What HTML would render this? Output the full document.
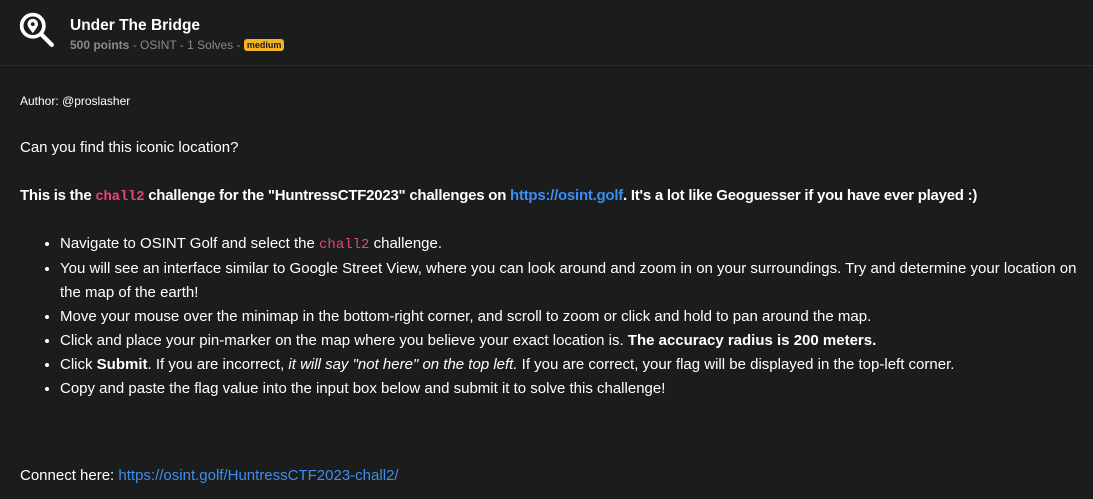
<!DOCTYPE html>
<html><head><meta charset="utf-8"><style>
html,body{margin:0;padding:0;background:#1b1c1c;width:1093px;height:499px;overflow:hidden;font-family:"Liberation Sans",sans-serif;color:#fff}
.hdr{height:65px;border-bottom:1px solid #2c2d2d;position:relative}
.icon{position:absolute;left:19px;top:12px}
.title{position:absolute;left:70px;top:17px;font-weight:bold;font-size:15.5px}
.sub{position:absolute;left:70px;top:38px;font-size:12px;color:#8d8a86}
.sub b{color:#8d8a86}
.badge{background:#f5b226;color:#1b1c1c;font-weight:bold;font-size:9px;padding:1px 3px;border-radius:3px;vertical-align:1px}
.t{position:absolute;left:20px;font-size:15px;white-space:nowrap}
code{font-family:"Liberation Mono",monospace;color:#e8447f;font-size:14px}
a{color:#3d8ef0;text-decoration:none}
ul{position:absolute;left:20px;top:232px;width:1035px;margin:0;padding-left:40px;font-size:15px;line-height:24px}
</style></head><body>
<div class="hdr">
<svg class="icon" width="36" height="36" viewBox="0 0 34 34"><circle cx="13" cy="13" r="10.5" fill="none" stroke="#fff" stroke-width="3.5"/><line x1="21" y1="21" x2="31" y2="31" stroke="#fff" stroke-width="4" stroke-linecap="round"/><path d="M13 20 C9 15 8 13 8 11.5 A5 5 0 0 1 18 11.5 C18 13 17 15 13 20Z" fill="#fff"/><circle cx="13" cy="11.5" r="1.8" fill="#1b1c1c"/></svg>
<div class="title">Under The Bridge</div>
<div class="sub"><b>500 points</b> - OSINT - 1 Solves - <span class="badge">medium</span></div>
</div>
<div class="t" style="top:94px;font-size:12px">Author: @proslasher</div>
<div class="t" style="top:139px">Can you find this iconic location?</div>
<div class="t" style="top:187px;font-weight:bold;letter-spacing:-0.25px">This is the <code>chall2</code> challenge for the "HuntressCTF2023" challenges on <a href="#">https://osint.golf</a>. It's a lot like Geoguesser if you have ever played :)</div>
<ul>
<li>Navigate to OSINT Golf and select the <code>chall2</code> challenge.</li>
<li>You will see an interface similar to Google Street View, where you can look around and zoom in on your surroundings. Try and determine your location on the map of the earth!</li>
<li>Move your mouse over the minimap in the bottom-right corner, and scroll to zoom or click and hold to pan around the map.</li>
<li>Click and place your pin-marker on the map where you believe your exact location is. <b>The accuracy radius is 200 meters.</b></li>
<li>Click <b>Submit</b>. If you are incorrect, <i>it will say "not here" on the top left.</i> If you are correct, your flag will be displayed in the top-left corner.</li>
<li>Copy and paste the flag value into the input box below and submit it to solve this challenge!</li>
</ul>
<div class="t" style="top:467px">Connect here: <a href="#">https://osint.golf/HuntressCTF2023-chall2/</a></div>
</body></html>
